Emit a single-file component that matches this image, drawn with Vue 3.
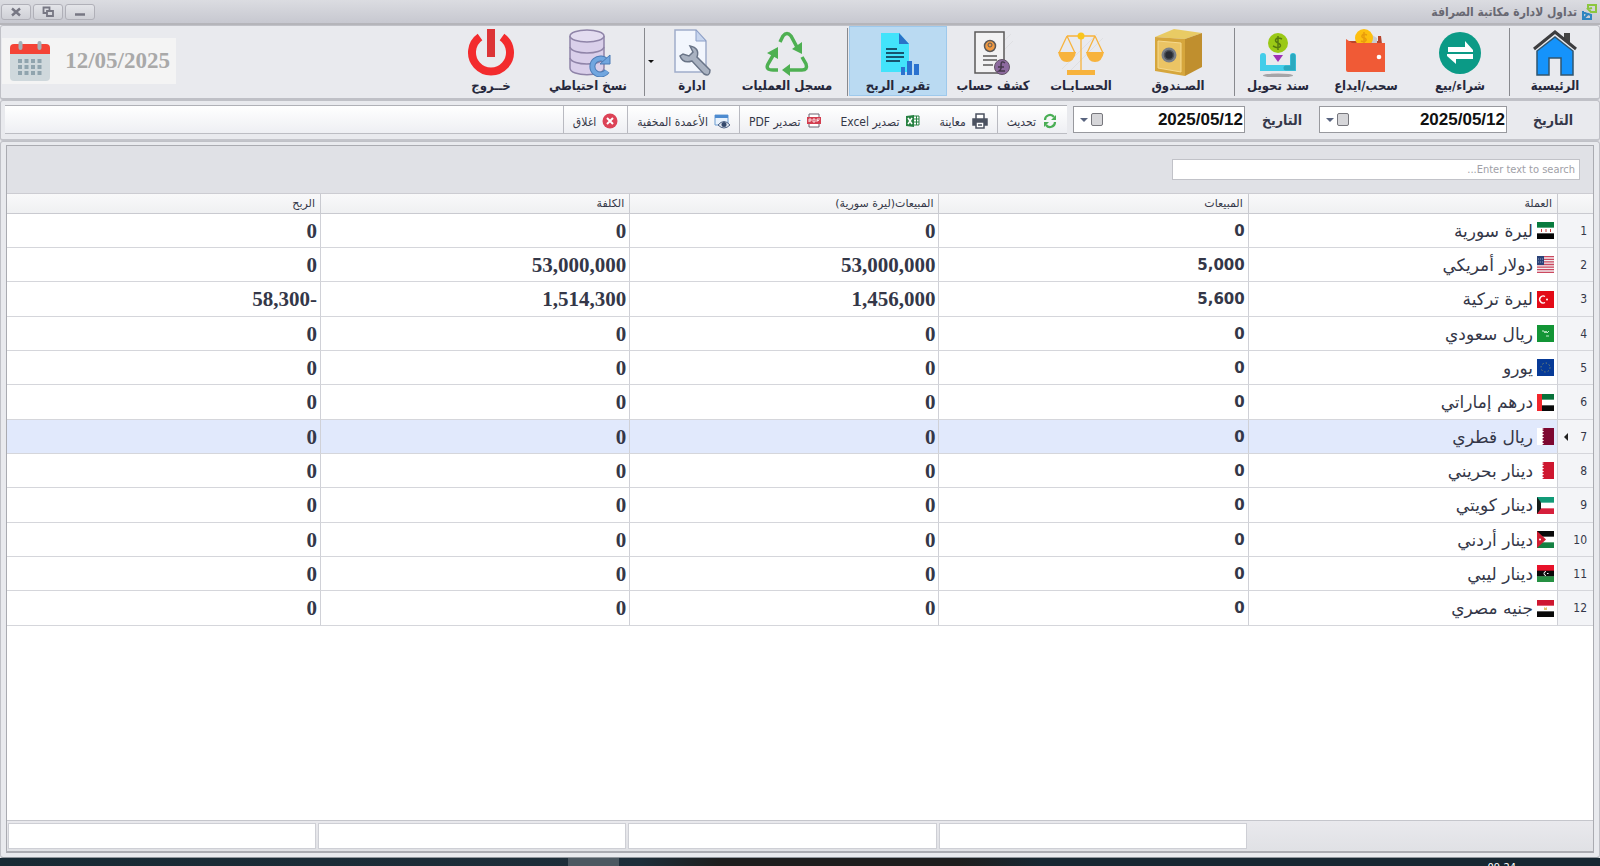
<template>
  <div class="window" dir="rtl">
    <header class="title-bar">
      <div class="title">
        <svg class="app-logo" viewBox="0 0 16 18">
          <path d="M7 6V2h8v7h-5L7 6l4-1" fill="none" stroke="#8cc63f" stroke-width="2" />
          <path d="M2 8v8h8v-4L7 11l-5 5M2 9l4 2" fill="none" stroke="#2f86c1" stroke-width="2" />
        </svg>
        <span>تداول لادارة مكاتبة الصرافة</span>
      </div>
      <div class="window-buttons">
        <button aria-label="تصغير">
          <svg viewBox="0 0 12 12"><path d="M1 8.500h10" stroke="#777783" stroke-width="2.500" /></svg>
        </button>
        <button aria-label="استعادة">
          <svg viewBox="0 0 12 12" fill="none" stroke="#777783" stroke-width="1.800">
            <path d="M5 7H1.500V1.500h6V4" />
            <path d="M5 5h6v5H5z" />
          </svg>
        </button>
        <button aria-label="اغلاق">
          <svg viewBox="0 0 12 12"><path d="M2 2.500l8 7M10 2.500l-8 7" stroke="#777783" stroke-width="2.400" /></svg>
        </button>
      </div>
    </header>

    <nav class="ribbon">
      <template v-for="item in ribbonItems" :key="item.id">
        <button class="ribbon-item" :class="['item-' + item.id, { active: item.id === activePage }]" @click="activePage = item.id">
          <svg v-if="item.id === 'home'" viewBox="0 0 48 48">
            <path d="M33 4h6v12l-6-6z" fill="#444" />
            <path d="M6 22L24 8l18 14v24H30V29H18v17H6z" fill="#1593fb" stroke="#31566f" stroke-width="1.500" />
            <path d="M3 20L24 3l21 17" fill="none" stroke="#3d3d3f" stroke-width="3" />
          </svg>
          <svg v-else-if="item.id === 'trade'" viewBox="0 0 48 48">
            <circle cx="24" cy="24" r="21" fill="#0b9a86" />
            <path d="M12 18h17v-6l8 9v2H12zM37 30H20v5l-9-8v-2h26z" fill="#fff" />
          </svg>
          <svg v-else-if="item.id === 'cash'" viewBox="0 0 48 48">
            <path d="M4 12h32v-5h3l1 8H4z" fill="#b8442c" />
            <path d="M30 6l5 3v7h-6z" fill="#c9ccd2" />
            <circle cx="22" cy="9" r="9" fill="#fdbf0f" />
            <path d="M25 6c-5-2-7 2-3 3s2 5-3 3M22 3v13" fill="none" stroke="#e99c0d" stroke-width="1.500" />
            <path d="M4 10l6 4h33v29H6q-2 0-2-2z" fill="#f05a36" />
            <circle cx="37" cy="28" r="2.300" fill="#fff" />
          </svg>
          <svg v-else-if="item.id === 'transfer'" viewBox="0 0 48 48">
            <ellipse cx="24" cy="46.500" rx="15" ry="2" fill="#a5a5a8" />
            <path d="M9 27v12h30V27" fill="none" stroke="#43cde9" stroke-width="6" stroke-linecap="round" />
            <path d="M39 27v12h-7" fill="none" stroke="#2ba9bf" stroke-width="5" stroke-linecap="round" />
            <circle cx="24" cy="14" r="10" fill="#9ac916" />
            <path d="M28 10c-6-3-9 2-4 4s2 7-5 3M24 7v14" fill="none" stroke="#567a10" stroke-width="1.500" />
            <path d="M19 26h10l-5 7z" fill="#a030b6" />
          </svg>
          <svg v-else-if="item.id === 'safe'" viewBox="0 0 48 48">
            <path d="M1 8L20 0l28 4-17 6z" fill="#e9cb64" />
            <path d="M31 10L48 4v34L31 47z" fill="#c08f2e" />
            <path d="M1 8l30 2v37L1 42z" fill="#d6a63c" />
            <path d="M4 12l23 2v29L4 39z" fill="#ebc464" stroke="#f6da8e" />
            <circle cx="15" cy="26" r="7.500" fill="#7b8087" />
            <circle cx="15" cy="26" r="4.500" fill="#292d34" stroke="#50555c" stroke-width="1.500" />
          </svg>
          <svg v-else-if="item.id === 'accounts'" viewBox="0 0 48 48" fill="none" stroke="#f7b33d">
            <path d="M5 40L40 5M12 43L46 9" stroke="#dedfe2" stroke-width="1" />
            <path d="M10 7h28M24 6v36M10 7L2 24M10 7l8 17M38 7l-8 17M38 7l8 17" stroke-width="1.300" />
            <path d="M1 23h18q-2 10-9 10T1 23zM29 23h18q-2 10-9 10t-9-10zM10 41h28v5H10z" fill="#f7b33d" stroke="none" />
            <circle cx="24" cy="7" r="3.500" fill="#f9c51c" stroke="none" />
          </svg>
          <svg v-else-if="item.id === 'statement'" viewBox="0 0 48 48" fill="none">
            <path d="M8 38L42 5M14 42l30-30" stroke="#dfe0e3" />
            <path d="M6 3h29v41H6z" fill="#f2f2f3" stroke="#5b5959" stroke-width="1.500" />
            <circle cx="21" cy="17" r="5.500" fill="#f09a43" stroke="#5b5959" stroke-width="1.500" />
            <circle cx="21" cy="16" r="2" stroke="#5b5959" />
            <path d="M14 27h14M14 31h14M14 36h10" stroke="#5b5959" stroke-width="1.500" />
            <circle cx="33" cy="38" r="7.500" fill="#8d6a9f" stroke="#625366" />
            <path d="M36 34q-4-3-4 2 1 4-2 6h6M29 38h6" stroke="#44384a" stroke-width="1.500" />
          </svg>
          <svg v-else-if="item.id === 'profit'" viewBox="0 0 48 48">
            <path d="M7 4h18l10 11v28H7z" fill="#42e3fb" />
            <path d="M25 4l10 11H25z" fill="#2a72c8" />
            <path d="M12 20h11M12 24h18M12 28h18M12 32h14" stroke="#17556e" stroke-width="2" />
            <path d="M27 38h4v8h-4zM33 32h5v14h-5zM40 35h5v11h-5z" fill="#2b72cf" />
          </svg>
          <svg v-else-if="item.id === 'log'" viewBox="0 0 48 48" fill="none" stroke="#4eb052" stroke-width="3.500">
            <path d="M17 13l3-6q4-5 8 0l7 13M12 23L5 35q-3 6 5 6h5M24 41h15q6 0 4-6l-4-7" />
            <path d="M29 20l10 5V13zM4 24l11 6V18zM27 35v12l-8-6z" fill="#4eb052" stroke="none" />
          </svg>
          <svg v-else-if="item.id === 'admin'" viewBox="0 0 48 48">
            <path d="M7 1h21l10 11v31H7z" fill="#f2f6fd" stroke="#a0adca" stroke-width="1.500" />
            <path d="M28 1v11h10z" fill="#c7d5ee" stroke="#8c9fc7" />
            <path d="M12 27q3 8 12 5l12 13q6 3 6-4L29 28q3-9-7-11l3 6-4 4-6-2z" fill="#a9b2c1" stroke="#697487" stroke-width="1.500" />
          </svg>
          <svg v-else-if="item.id === 'backup'" viewBox="0 0 48 48">
            <path d="M6 7v32c0 9 34 9 34 0V7" fill="#d9cfea" stroke="#8f84a8" stroke-width="1.500" />
            <ellipse cx="23" cy="7" rx="17" ry="6" fill="#e3dcf0" stroke="#8f84a8" stroke-width="1.500" />
            <path d="M6 18c2 8 32 8 34 0M6 29c2 8 32 8 34 0" fill="none" stroke="#8f84a8" stroke-width="1.500" />
            <path d="M43 33a8 8 0 1 0 0 9" fill="none" stroke="#4b7bb5" stroke-width="6" />
            <path d="M43 33a8 8 0 1 0 0 9" fill="none" stroke="#71a6df" stroke-width="4" />
            <path d="M36 35h10V26z" fill="#71a6df" stroke="#4b7bb5" />
          </svg>
          <svg v-else viewBox="0 0 48 48" fill="none" stroke="#f32b2d">
            <path d="M13 8a19 19 0 1 0 22 0" stroke-width="8" />
            <path d="M24 0v28" stroke="#dc3437" stroke-width="8" />
          </svg>
          <span>{{ item.label }}</span>
        </button>
        <i v-if="item.arrow" class="drop-arrow"></i>
        <span v-if="item.divider" class="divider"></span>
      </template>
      <div class="today">
        <svg viewBox="0 0 40 40">
          <path d="M0 12h40v24q0 4-4 4H4q-4 0-4-4z" fill="#cfd8dc" />
          <path d="M0 13V7q0-4 4-4h32q4 0 4 4v6z" fill="#f44336" />
          <path d="M10.500 2v5M29.500 2v5" stroke="#a3b0b7" stroke-width="4" stroke-linecap="round" />
          <path d="M8 20h25M8 26h25M8 32h25" stroke="#90a4ae" stroke-width="4" stroke-dasharray="4 2.500" />
        </svg>
        <span dir="ltr">12/05/2025</span>
      </div>
    </nav>

    <div class="filter-bar">
      <template v-for="field in dateFields" :key="field.id">
        <label :for="field.id">التاريخ</label>
        <div class="date-box">
          <input :id="field.id" v-model="field.value" dir="ltr" type="text" />
          <button aria-label="التقويم"><i class="calendar-mark"></i><i class="date-arrow"></i></button>
        </div>
      </template>
      <div class="toolbar">
        <button v-for="action in actions" :key="action.id" class="tool" :class="{ separated: action.separated }">
          <svg v-if="action.id === 'refresh'" viewBox="0 0 16 16" fill="none" stroke="#4aae55" stroke-width="2.200">
            <path d="M3 7a5 5 0 0 1 9-3M13 9a5 5 0 0 1-9 3" />
            <path d="M14 2v5H9zM2 14V9h5z" fill="#4aae55" stroke="none" />
          </svg>
          <svg v-else-if="action.id === 'preview'" viewBox="0 0 16 16" fill="#fff" stroke="#4b5260" stroke-width="1.500">
            <path d="M4 6V1h8v5" />
            <path d="M1 6h14v6H1z" fill="#4b5260" />
            <path d="M4 9h8v6H4zM6 12h4" />
          </svg>
          <svg v-else-if="action.id === 'excel'" viewBox="0 0 16 16">
            <path d="M8 3h6v9H8z" fill="#fff" stroke="#278142" />
            <path d="M9 6h5M9 9h5M11.500 3v9" stroke="#278142" />
            <path d="M1 3l8-1v12l-8-1z" fill="#278142" />
            <path d="M3 5l4 6M7 5l-4 6" stroke="#fff" stroke-width="1.500" />
          </svg>
          <svg v-else-if="action.id === 'pdf'" viewBox="0 0 16 16">
            <path d="M3 1h10v13H3z" fill="#fff" stroke="#6d6270" />
            <path d="M1 4h14v7H1z" fill="#d33e50" />
            <path d="M3 9V6h2v2H3M7 6v3h2V6zM11 9V6h3M11 7.500h2" fill="none" stroke="#fff" stroke-width=".8" />
          </svg>
          <svg v-else-if="action.id === 'columns'" viewBox="0 0 16 16">
            <path d="M1 2h13v10H1z" fill="#e9f2fc" stroke="#6a9cd2" />
            <path d="M1 2h13v3H1z" fill="#4d8bd0" />
            <path d="M4 12q6-7 12 0-6 6-12 0z" fill="#dfe6f0" stroke="#4e6284" />
            <circle cx="10" cy="11.500" r="2.500" fill="#35496c" />
          </svg>
          <svg v-else viewBox="0 0 16 16">
            <circle cx="8" cy="8" r="7.500" fill="#dc4256" />
            <path d="M5 5l6 6M11 5l-6 6" stroke="#fff" stroke-width="2" />
          </svg>
          <span>{{ action.label }}</span>
        </button>
      </div>
    </div>

    <main class="report">
      <div class="grid-panel">
        <div class="search-row">
          <input v-model="search" type="text" placeholder="Enter text to search..." aria-label="بحث" />
        </div>
        <div class="grid-body">
          <table>
            <colgroup>
              <col class="col-index" />
              <col v-for="n in 4" :key="n" class="col-data" />
              <col />
            </colgroup>
            <thead>
              <tr>
                <th></th>
                <th v-for="column in columns" :key="column">{{ column }}</th>
              </tr>
            </thead>
            <tbody>
              <tr v-for="(row, index) in filteredRows" :key="row.flag" :class="{ selected: row.flag === selected }" @click="selected = row.flag">
                <td class="index"><div><span>{{ index + 1 }}</span><i v-if="row.flag === selected"></i></div></td>
                <td class="currency">
                  <div>
                    <svg viewBox="0 0 17 17">
                      <template v-if="stripes[row.flag]">
                        <rect v-for="(color, i) in stripes[row.flag]" :key="i" :y="i * 17 / 3" width="17" height="6" :fill="color" />
                      </template>
                      <path v-if="row.flag === 'sy'" d="M4.500 7v3M9 7v3M13.500 7v3" stroke="#c54343" />
                      <template v-if="row.flag === 'us'">
                        <rect width="17" height="17" fill="#f2ecef" />
                        <path d="M0 .7h17M0 3.300h17M0 5.900h17M0 8.500h17M0 11.100h17M0 13.700h17M0 16.300h17" stroke="#cc4960" stroke-width="1.300" />
                        <rect width="7" height="9" fill="#2b4278" />
                        <path d="M1 3h5M1 6h5" stroke="#8e9dbd" stroke-dasharray="1 1" />
                      </template>
                      <template v-if="row.flag === 'tr'">
                        <rect width="17" height="17" fill="#e30a17" />
                        <path d="M8 5.500a3.500 3.500 0 1 0 0 6" fill="none" stroke="#fff" stroke-width="1.400" />
                        <circle cx="10" cy="8.500" r="1" fill="#fff" />
                      </template>
                      <template v-if="row.flag === 'sa'">
                        <rect width="17" height="17" fill="#139536" />
                        <path d="M5 6h2l1 2 1-2 1 2 2-2M9 11h3" fill="none" stroke="#c7ebce" />
                      </template>
                      <template v-if="row.flag === 'eu'">
                        <rect width="17" height="17" fill="#073a97" />
                        <circle cx="8.500" cy="8.500" r="4.500" fill="none" stroke="#a8a85d" stroke-dasharray="1 2.500" />
                      </template>
                      <rect v-if="row.flag === 'ae'" width="5" height="17" fill="#f2262b" />
                      <template v-if="row.flag === 'qa' || row.flag === 'bh'">
                        <rect width="17" height="17" fill="#fff" />
                        <path d="M5 0h12v17H5l2-1.500L5 14l2-1.500L5 11l2-1.500L5 8l2-1.500L5 5l2-1.500L5 2l2-1z" :fill="row.flag === 'qa' ? '#7d0731' : '#ce1730'" />
                      </template>
                      <path v-if="row.flag === 'kw'" d="M0 0l4 5.500v6L0 17z" fill="#161c19" />
                      <template v-if="row.flag === 'jo'">
                        <path d="M0 0l9 8.500L0 17z" fill="#ce1d32" />
                        <circle cx="3" cy="8.500" r="1" fill="#fff" />
                      </template>
                      <path v-if="row.flag === 'ly'" d="M9 6.500a2 2 0 1 0 0 4M10 8.500h1.500" fill="none" stroke="#fff" />
                      <path v-if="row.flag === 'eg'" d="M7 7l1.500 1L10 7v3H7z" fill="#e1c36e" />
                    </svg>
                    <span>{{ row.name }}</span>
                  </div>
                </td>
                <td class="sales">{{ row.sales }}</td>
                <td class="amount">{{ row.local }}</td>
                <td class="amount">{{ row.cost }}</td>
                <td class="amount">{{ row.profit }}</td>
              </tr>
            </tbody>
          </table>
        </div>
        <div class="totals">
          <span v-for="n in 4" :key="n"></span>
        </div>
      </div>
    </main>

    <footer class="taskbar">
      <i></i>
      <span dir="ltr">09:24</span>
    </footer>
  </div>
</template>

<script setup>
import { computed, reactive, ref } from 'vue'

const activePage = ref('profit')
const selected = ref('qa')
const search = ref('')

const ribbonItems = [
  { id: 'home', label: 'الرئيسية', divider: true },
  { id: 'trade', label: 'شراء/بيع' },
  { id: 'cash', label: 'سحب/ايداع' },
  { id: 'transfer', label: 'سند تحويل', divider: true },
  { id: 'safe', label: 'الصـندوق' },
  { id: 'accounts', label: 'الحسـابـات' },
  { id: 'statement', label: 'كشف حساب' },
  { id: 'profit', label: 'تقرير الربح', divider: true },
  { id: 'log', label: 'مسجل العمليات' },
  { id: 'admin', label: 'ادارة', arrow: true, divider: true },
  { id: 'backup', label: 'نسخ احتياطي' },
  { id: 'exit', label: 'خــروج' }
]

const dateFields = reactive([
  { id: 'date-from', value: '2025/05/12' },
  { id: 'date-to', value: '2025/05/12' }
])

const actions = [
  { id: 'refresh', label: 'تحديث', separated: true },
  { id: 'preview', label: 'معاينة' },
  { id: 'excel', label: 'تصدير Excel' },
  { id: 'pdf', label: 'تصدير PDF', separated: true },
  { id: 'columns', label: 'الأعمدة المخفية', separated: true },
  { id: 'close', label: 'اغلاق', separated: true }
]

const columns = ['العملة', 'المبيعات', 'المبيعات(ليرة سورية)', 'الكلفة', 'الربح']

const rows = [
  { flag: 'sy', name: 'ليرة سورية', sales: '0', local: '0', cost: '0', profit: '0' },
  { flag: 'us', name: 'دولار أمريكي', sales: '5,000', local: '53,000,000', cost: '53,000,000', profit: '0' },
  { flag: 'tr', name: 'ليرة تركية', sales: '5,600', local: '1,456,000', cost: '1,514,300', profit: '-58,300' },
  { flag: 'sa', name: 'ريال سعودي', sales: '0', local: '0', cost: '0', profit: '0' },
  { flag: 'eu', name: 'يورو', sales: '0', local: '0', cost: '0', profit: '0' },
  { flag: 'ae', name: 'درهم إماراتي', sales: '0', local: '0', cost: '0', profit: '0' },
  { flag: 'qa', name: 'ريال قطري', sales: '0', local: '0', cost: '0', profit: '0' },
  { flag: 'bh', name: 'دينار بحريني', sales: '0', local: '0', cost: '0', profit: '0' },
  { flag: 'kw', name: 'دينار كويتي', sales: '0', local: '0', cost: '0', profit: '0' },
  { flag: 'jo', name: 'دينار أردني', sales: '0', local: '0', cost: '0', profit: '0' },
  { flag: 'ly', name: 'دينار ليبي', sales: '0', local: '0', cost: '0', profit: '0' },
  { flag: 'eg', name: 'جنيه مصري', sales: '0', local: '0', cost: '0', profit: '0' }
]

const stripes = {
  sy: ['#087b3e', '#ffffff', '#050505'],
  ae: ['#08723a', '#ffffff', '#0b0b0b'],
  kw: ['#129b78', '#ffffff', '#d6203c'],
  jo: ['#0a0a0a', '#ffffff', '#148142'],
  ly: ['#e8122a', '#0a0a0a', '#269143'],
  eg: ['#ce1730', '#ffffff', '#090909']
}

const filteredRows = computed(() => rows.filter(row => row.name.includes(search.value.trim())))
</script>

<style>
body {
  margin: 0;
}
</style>

<style scoped>
.window {
  display: flex;
  flex-direction: column;
  height: 100vh;
  overflow: hidden;
  background: #e9eaee;
  color: #343748;
  font-family: "DejaVu Sans Condensed", "DejaVu Sans", sans-serif;
}

.window * {
  box-sizing: border-box;
}

button,
input {
  font-family: inherit;
  color: inherit;
}

.title-bar {
  flex: none;
  display: flex;
  align-items: center;
  justify-content: space-between;
  height: 25px;
  padding: 0 3px 0 1px;
  border-bottom: 2px solid #b5b5ba;
  background: linear-gradient(#dbdce1, #c7c8d0);
}

.title {
  display: flex;
  align-items: center;
  gap: 4px;
  color: #686872;
  font-size: 12px;
  font-weight: 700;
}

.app-logo {
  width: 16px;
  height: 18px;
}

.window-buttons {
  display: flex;
  gap: 2px;
}

.window-buttons button {
  display: flex;
  align-items: center;
  justify-content: center;
  width: 30px;
  height: 16px;
  padding: 0;
  border: 1px solid #b0b0b8;
  border-radius: 3px;
  background: linear-gradient(#e4e5e9, #cfd0d6);
}

.window-buttons svg {
  width: 12px;
  height: 12px;
}

.ribbon {
  flex: none;
  display: flex;
  align-items: stretch;
  height: 75px;
  padding: 0 0 2px 1px;
  border: 1px solid #c0c1c7;
  border-bottom: 2px solid #bfc0c6;
  border-radius: 3px;
}

.ribbon-item {
  display: flex;
  flex-direction: column;
  align-items: center;
  gap: 1px;
  width: 92px;
  padding: 2px 0 0;
  border: 1px solid transparent;
  background: none;
  color: #26283c;
  font-size: 13px;
  font-weight: 700;
  line-height: 16px;
  white-space: nowrap;
}

.ribbon-item svg {
  width: 48px;
  height: 48px;
}

.ribbon-item.active {
  border-color: #9ec9ec;
  background: #badaf2;
}

.item-home {
  width: 88px;
}

.item-trade {
  width: 96px;
}

.item-transfer,
.item-accounts,
.item-exit {
  width: 84px;
}

.item-profit {
  width: 98px;
}

.item-safe,
.item-backup {
  width: 110px;
}

.item-log {
  width: 118px;
}

.item-admin {
  width: 72px;
}

.divider {
  width: 1px;
  margin: 2px 1px 0;
  background: #88898e;
}

.drop-arrow {
  align-self: center;
  margin: 0 2px;
  border: 3px solid transparent;
  border-top-color: #111;
  border-bottom: 0;
}

.today {
  display: flex;
  align-items: center;
  justify-content: space-between;
  flex-direction: row-reverse;
  width: 174px;
  height: 46px;
  margin: 12px auto 0 0;
  padding: 0 6px 0 8px;
  background: #f4f4f4;
  color: #a9a9a9;
  font-family: "Liberation Serif", serif;
  font-size: 23px;
  font-weight: 700;
}

.today svg {
  width: 40px;
  height: 40px;
}

.filter-bar {
  flex: none;
  display: flex;
  align-items: center;
  height: 41px;
  padding: 0 0 1px 4px;
  border: 1px solid #c0c1c7;
  border-bottom: 2px solid #c3c4ca;
  border-radius: 3px;
}

.filter-bar label {
  width: 74px;
  text-align: center;
  font-size: 14px;
  font-weight: 700;
}

.filter-bar label:first-child {
  width: 92px;
}

.date-box {
  display: flex;
  width: 188px;
  height: 27px;
  border: 1px solid #98999e;
  background: #fff;
}

.filter-bar .date-box:nth-of-type(2) {
  width: 172px;
}

.date-box input {
  flex: 1;
  min-width: 0;
  padding: 0 1px;
  border: 0;
  background: none;
  color: #111;
  font-family: "Liberation Sans", sans-serif;
  font-size: 17px;
  font-weight: 700;
  text-align: right;
}

.date-box button {
  display: flex;
  align-items: center;
  gap: 3px;
  padding: 0 6px;
  border: 0;
  background: none;
}

.calendar-mark {
  width: 12px;
  height: 13px;
  border: 1px solid #77777d;
  border-radius: 2px;
  background: #d6d6d9;
}

.date-arrow {
  border: 4px solid transparent;
  border-top-color: #59647f;
  border-bottom: 0;
}

.toolbar {
  flex: 1;
  display: flex;
  height: 29px;
  margin-right: 6px;
  border-top: 1px solid #b0b1b7;
  border-bottom: 1px solid #bcbdc3;
  background: linear-gradient(#fff, #eeeff3);
}

.tool {
  display: flex;
  align-items: center;
  gap: 6px;
  padding: 2px 9px 0;
  border: 0;
  background: none;
  font-size: 12px;
  white-space: nowrap;
}

.tool.separated {
  border-left: 1px solid #b9bac1;
}

.tool svg {
  width: 16px;
  height: 16px;
}

.tool span {
  padding-top: 2px;
}

.report {
  flex: 1;
  display: flex;
  min-height: 0;
  padding: 3px 5px 4px;
  border: 1px solid #c0c1c7;
  border-bottom-color: #92979d;
  border-radius: 3px;
}

.grid-panel {
  flex: 1;
  display: flex;
  flex-direction: column;
  min-width: 0;
  border: 1px solid #aaabb1;
  border-bottom-width: 2px;
  background: #e0e1e6;
}

.search-row {
  flex: none;
  height: 47px;
  padding: 13px;
}

.search-row input {
  display: block;
  width: 408px;
  height: 21px;
  padding: 0 4px;
  border: 1px solid #c1c2c8;
  background: #fff;
  font-size: 11px;
}

.search-row input::placeholder {
  color: #a0a0a7;
  opacity: 1;
}

.grid-body {
  flex: 1;
  min-height: 0;
  border-top: 1px solid #ccccd2;
  background: #fff;
}

table {
  width: 100%;
  border-collapse: separate;
  border-spacing: 0;
  table-layout: fixed;
}

.col-index {
  width: 36px;
}

.col-data {
  width: 19.5%;
}

th {
  height: 20px;
  padding: 0 5px;
  border-bottom: 1px solid #c9cad0;
  border-left: 1px solid #c9cad0;
  background: linear-gradient(#f9f9fa, #eff0f2);
  font-family: "DejaVu Sans", sans-serif;
  font-size: 11px;
  font-weight: 400;
  line-height: 14px;
  text-align: right;
}

td {
  height: 34px;
  padding: 0 3px;
  border-bottom: 1px solid #d5d6db;
  border-left: 1px solid #d0d1d7;
  line-height: 24px;
  text-align: right;
}

tr:nth-child(3n) td {
  height: 35px;
}

th:last-child,
td:last-child {
  border-left: 0;
}

.selected td {
  background: #e1e9fc;
}

.selected .index,
.index {
  padding: 0 6px;
  background: #f3f4f7;
  font-size: 12px;
}

.index div {
  display: flex;
  align-items: center;
  justify-content: space-between;
}

.index i {
  border: 4px solid transparent;
  border-right-color: #222;
  border-left: 0;
}

.currency {
  font-family: "DejaVu Sans", sans-serif;
  font-size: 17px;
}

.currency div {
  display: flex;
  align-items: center;
  gap: 4px;
}

.currency svg {
  width: 17px;
  height: 17px;
}

.sales {
  font-family: "DejaVu Sans", sans-serif;
  font-size: 15px;
  font-weight: 700;
}

.amount {
  font-family: "Liberation Serif", serif;
  font-size: 21px;
  font-weight: 700;
}

.totals {
  flex: none;
  display: flex;
  height: 31px;
  padding: 2px calc(19.5% + 36px) 2px 0;
  border-top: 1px solid #c5c6cc;
  background: linear-gradient(#e9e9ed, #e0e1e5);
}

.totals span {
  flex: 1;
  margin: 0 1px;
  border: 1px solid #cecfd5;
  background: #fff;
}

.taskbar {
  flex: none;
  display: flex;
  justify-content: space-between;
  height: 8px;
  overflow: hidden;
  background: linear-gradient(90deg, #182a34, #1e2e3a 40%, #1e1e1e 45%, #1e1e1e 60%, #172732 65%, #172732);
}

.taskbar i {
  order: 2;
  width: 51px;
  margin-left: 568px;
  background: #4c5861;
}

.taskbar span {
  margin-right: 84px;
  padding-top: 3px;
  color: #fff;
  font-size: 11px;
  line-height: 13px;
}
</style>
